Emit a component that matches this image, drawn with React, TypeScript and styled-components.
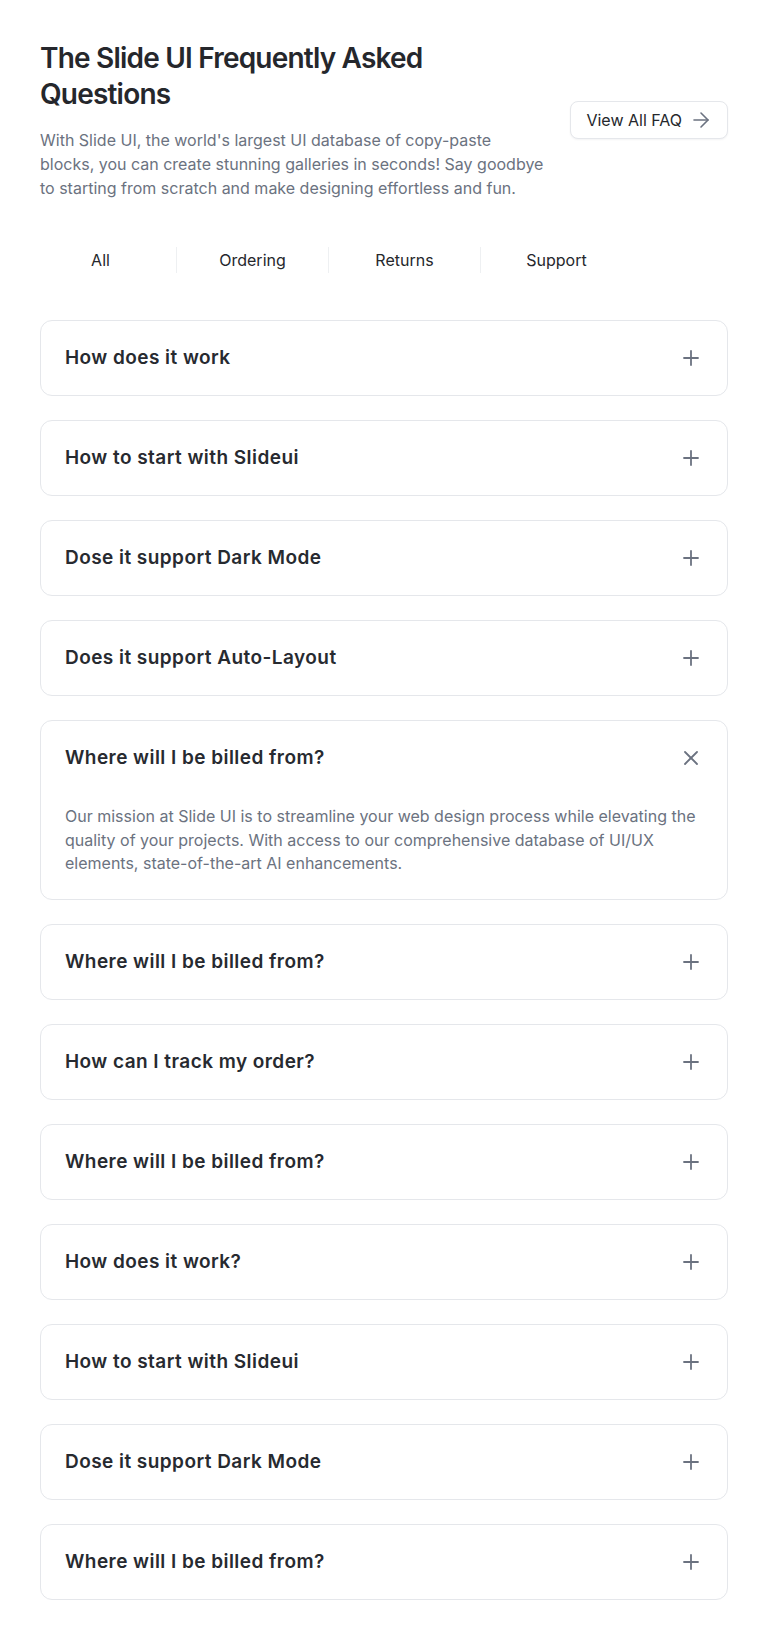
import React, { useState } from "react";
import styled, { createGlobalStyle } from "styled-components";
import { Plus, X, ArrowRight } from "lucide-react";

const GlobalStyle = createGlobalStyle`
  html, body {
    margin: 0;
    padding: 0;
    background: #ffffff;
  }
  body {
    font-family: Inter, "Noto Sans", "Liberation Sans", sans-serif;
    -webkit-font-smoothing: antialiased;
  }
  * { box-sizing: border-box; }
`;

const Page = styled.main`
  padding: 40px 40px 40px;
  display: flex;
  flex-direction: column;
`;

const Header = styled.header`
  display: flex;
  align-items: center;
  justify-content: space-between;
  gap: 24px;
`;

const HeaderText = styled.div`
  max-width: 506px;
  display: flex;
  flex-direction: column;
  gap: 16px;
`;

const Title = styled.h1`
  margin: 0;
  font-size: 28px;
  line-height: 36px;
  font-weight: 600;
  color: #25272c;
  letter-spacing: -0.8px;
`;

const Lead = styled.p`
  margin: 0;
  font-size: 16px;
  line-height: 24px;
  color: #6b7280;
`;

const ViewAllButton = styled.button`
  flex-shrink: 0;
  display: inline-flex;
  align-items: center;
  gap: 7px;
  height: 38px;
  padding: 0 14px 0 15px;
  background: #ffffff;
  border: 1px solid #e5e7eb;
  border-radius: 8px;
  box-shadow: 0 1px 2px rgba(16, 24, 40, 0.05);
  font-family: inherit;
  font-size: 16px;
  color: #25272c;
  cursor: pointer;
  svg { color: #6b7280; }
`;

const Tabs = styled.nav`
  display: flex;
  align-items: center;
  margin: 40px 0 40px -16px;
  height: 40px;
`;

const Tab = styled.button<{ $divider: boolean }>`
  width: 152px;
  height: 26px;
  display: flex;
  align-items: center;
  justify-content: center;
  background: none;
  border: none;
  border-left: 1px solid ${(p) => (p.$divider ? "#eef0f2" : "transparent")};
  font-family: inherit;
  font-size: 16px;
  color: #25272c;
  padding: 0;
  cursor: pointer;
`;

const List = styled.div`
  display: flex;
  flex-direction: column;
  gap: 24px;
`;

const Card = styled.div`
  border: 1px solid #e5e7eb;
  border-radius: 12px;
  background: #ffffff;
`;

const Question = styled.button`
  width: 100%;
  display: flex;
  align-items: center;
  justify-content: space-between;
  padding: 23px 24px;
  background: none;
  border: none;
  font-family: inherit;
  font-size: 19px;
  line-height: 28px;
  font-weight: 600;
  letter-spacing: 0.45px;
  color: #272a30;
  text-align: left;
  cursor: pointer;
  svg { color: #6b7280; flex-shrink: 0; }
`;

const Answer = styled.p`
  margin: 0;
  padding: 10px 24px 23px;
  font-size: 16px;
  line-height: 23.5px;
  color: #6b7280;
`;

const tabs = ["All", "Ordering", "Returns", "Support"];

const answerText =
  "Our mission at Slide UI is to streamline your web design process while elevating the quality of your projects. With access to our comprehensive database of UI/UX elements, state-of-the-art AI enhancements.";

const questions = [
  "How does it work",
  "How to start with Slideui",
  "Dose it support Dark Mode",
  "Does it support Auto-Layout",
  "Where will I be billed from?",
  "Where will I be billed from?",
  "How can I track my order?",
  "Where will I be billed from?",
  "How does it work?",
  "How to start with Slideui",
  "Dose it support Dark Mode",
  "Where will I be billed from?",
];

export default function App() {
  const [open, setOpen] = useState<number>(4);
  const [tab, setTab] = useState(0);
  return (
    <>
      <GlobalStyle />
      <Page>
        <Header>
          <HeaderText>
            <Title>The Slide UI Frequently Asked Questions</Title>
            <Lead>
              With Slide UI, the world's largest UI database of copy-paste blocks, you can create
              stunning galleries in seconds! Say goodbye to starting from scratch and make designing
              effortless and fun.
            </Lead>
          </HeaderText>
          <ViewAllButton>
            View All FAQ
            <ArrowRight size={24} strokeWidth={1.6} />
          </ViewAllButton>
        </Header>
        <Tabs>
          {tabs.map((t, i) => (
            <Tab key={t} $divider={i > 0} onClick={() => setTab(i)} aria-pressed={tab === i}>
              {t}
            </Tab>
          ))}
        </Tabs>
        <List>
          {questions.map((q, i) => (
            <Card key={i}>
              <Question onClick={() => setOpen(open === i ? -1 : i)}>
                {q}
                {open === i ? (
                  <X size={24} strokeWidth={1.8} />
                ) : (
                  <Plus size={24} strokeWidth={1.8} />
                )}
              </Question>
              {open === i && <Answer>{answerText}</Answer>}
            </Card>
          ))}
        </List>
      </Page>
    </>
  );
}
